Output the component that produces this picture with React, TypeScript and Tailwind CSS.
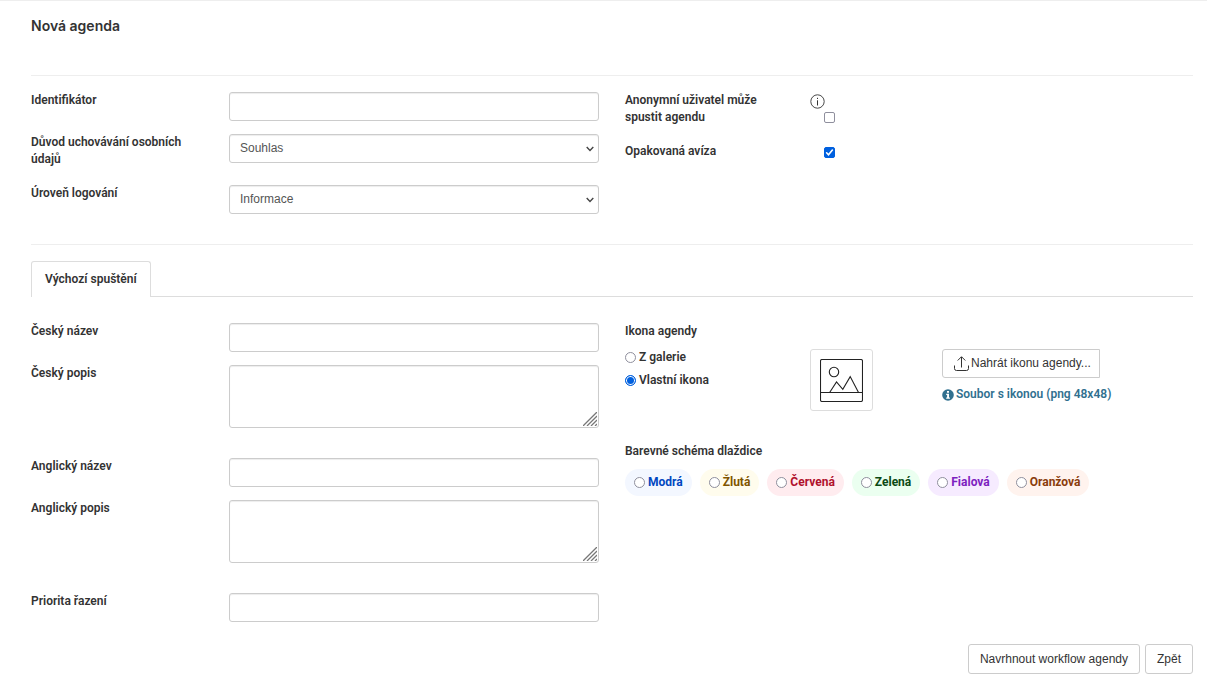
import React, { useState } from 'react';
import clsx from 'clsx';

const controlClass =
  "block w-full rounded-[3px] border border-[#ccc] bg-white font-['Liberation_Sans',sans-serif] text-[12px] font-normal text-[#555] shadow-[inset_0_1px_1px_rgba(0,0,0,0.075)] outline-none focus:border-[#66afe9]";

const radioClass =
  'size-[11px] shrink-0 appearance-none rounded-full border border-[#8f8f9d] bg-white checked:border-[#0060df] checked:bg-[#0060df] checked:shadow-[inset_0_0_0_1px_#fff]';

const buttonClass =
  "border border-[#ccc] bg-white font-['Liberation_Sans',sans-serif] font-normal text-[#333] hover:bg-gray-100";

interface FieldProps {
  id: string;
  label: string;
  children: React.ReactNode;
}

const Field: React.FC<FieldProps> = ({ id, label, children }) => (
  <div className="grid grid-cols-[198px_1fr]">
    <label htmlFor={id} className="pr-8 pb-[17px]">
      {label}
    </label>
    <div className="pb-[13px]">{children}</div>
  </div>
);

const TextField: React.FC<{ id: string; label: string }> = ({ id, label }) => (
  <Field id={id} label={label}>
    <input id={id} type="text" className={clsx(controlClass, 'h-[29px] px-2.5')} />
  </Field>
);

const TextAreaField: React.FC<{ id: string; label: string }> = ({ id, label }) => (
  <Field id={id} label={label}>
    <div className="relative mb-[17px]">
      <textarea id={id} className={clsx(controlClass, 'h-[63px] resize-none px-2.5 py-1')} />
      <svg
        viewBox="0 0 14 14"
        className="pointer-events-none absolute right-0.5 bottom-0.5 size-3.5"
        stroke="#777"
        strokeWidth="1.3"
      >
        <path d="M0 14L14 0M4 14L14 4M8 14L14 8M12 14L14 12" />
      </svg>
    </div>
  </Field>
);

const SelectField: React.FC<{ id: string; label: string; options: string[] }> = ({ id, label, options }) => (
  <Field id={id} label={label}>
    <div className="relative">
      <select id={id} className={clsx(controlClass, 'h-[29px] appearance-none px-2.5')}>
        {options.map(option => (
          <option key={option}>{option}</option>
        ))}
      </select>
      <svg
        viewBox="0 0 8 6"
        className="pointer-events-none absolute top-3 right-[5px] h-1.5 w-2"
        fill="none"
        stroke="#444"
        strokeWidth="1.4"
      >
        <path d="M0.7 1L4 4.4L7.3 1" />
      </svg>
    </div>
  </Field>
);

const Checkbox: React.FC<{ id: string; defaultChecked?: boolean }> = ({ id, defaultChecked }) => (
  <span className="relative ml-3.5 block size-[11px]">
    <input
      id={id}
      type="checkbox"
      defaultChecked={defaultChecked}
      className="peer block size-[11px] appearance-none rounded-[2px] border border-[#8f8f9d] bg-white checked:border-[#0060df] checked:bg-[#0060df]"
    />
    <svg
      viewBox="0 0 11 11"
      className="pointer-events-none absolute inset-0 hidden size-[11px] peer-checked:block"
      fill="none"
      stroke="#fff"
      strokeWidth="1.6"
      strokeLinecap="round"
    >
      <path d="M2.6 5.8L4.5 7.8L8.4 3" />
    </svg>
  </span>
);

const schemes = [
  { value: 'blue', label: 'Modrá', style: 'bg-[#f3f7ff] text-[#0046c0]' },
  { value: 'yellow', label: 'Žlutá', style: 'bg-[#fffced] text-[#805500]' },
  { value: 'red', label: 'Červená', style: 'bg-[#ffecef] text-[#b0102c]' },
  { value: 'green', label: 'Zelená', style: 'bg-[#ebfff0] text-[#0b4a14]' },
  { value: 'purple', label: 'Fialová', style: 'bg-[#f6ebff] text-[#7d1fc0]' },
  { value: 'orange', label: 'Oranžová', style: 'bg-[#fff3ee] text-[#8a3c0c]' },
];

const App: React.FC = () => {
  const [iconSource, setIconSource] = useState<'gallery' | 'custom'>('custom');
  const [scheme, setScheme] = useState('');

  return (
    <main className="border-t border-[#eee] bg-white pr-3.5 pl-[31px] font-['Roboto','Liberation_Sans',sans-serif] text-[12px] leading-[17px] font-semibold text-[#333]">
      <h1 className="pt-[15px] pb-[39px] font-['Inter',sans-serif] text-[14px] leading-5">Nová agenda</h1>

      <form onSubmit={e => e.preventDefault()}>
        {/* General settings */}
        <section className="grid grid-cols-2 gap-x-[26px] border-y border-[#eee] pt-4 pb-[17px]">
          <div>
            <TextField id="identifier" label="Identifikátor" />
            <SelectField
              id="reason"
              label="Důvod uchovávání osobních údajů"
              options={['Souhlas', 'Smlouva', 'Oprávněný zájem']}
            />
            <SelectField id="logging" label="Úroveň logování" options={['Informace', 'Varování', 'Chyba']} />
          </div>
          <div>
            <div className="grid grid-cols-[185px_1fr] pb-[17px]">
              <label htmlFor="anonymous" className="pr-8">
                Anonymní uživatel může spustit agendu
              </label>
              <div className="pt-0.5">
                <svg viewBox="0 0 15 15" className="mb-[3px] size-[15px]" fill="none" stroke="#333">
                  <circle cx="7.5" cy="7.5" r="6.7" strokeWidth="0.9" />
                  <path d="M7.5 6.3V11.5M7.5 3.8V5" />
                </svg>
                <Checkbox id="anonymous" />
              </div>
            </div>
            <div className="grid grid-cols-[185px_1fr]">
              <label htmlFor="notices">Opakovaná avíza</label>
              <div className="pt-1">
                <Checkbox id="notices" defaultChecked />
              </div>
            </div>
          </div>
        </section>

        {/* Tabs */}
        <div role="tablist" className="mt-4 flex border-b border-[#ddd]">
          <button
            type="button"
            role="tab"
            aria-selected="true"
            className="-mb-px h-9 rounded-t-[3px] border border-b-0 border-[#ddd] bg-white px-[13px]"
          >
            Výchozí spuštění
          </button>
        </div>

        <section className="mt-[26px] grid grid-cols-2 gap-x-[26px]">
          <div>
            <TextField id="name-cs" label="Český název" />
            <TextAreaField id="desc-cs" label="Český popis" />
            <TextField id="name-en" label="Anglický název" />
            <TextAreaField id="desc-en" label="Anglický popis" />
            <TextField id="priority" label="Priorita řazení" />
          </div>

          <div>
            <h2 className="mb-[9px]">Ikona agendy</h2>
            <div className="flex h-[94px] items-start">
              <div className="flex w-[185px] flex-col gap-1.5">
                <label className="flex items-center gap-[3px]">
                  <input
                    type="radio"
                    name="icon"
                    className={radioClass}
                    checked={iconSource === 'gallery'}
                    onChange={() => setIconSource('gallery')}
                  />
                  Z galerie
                </label>
                <label className="flex items-center gap-[3px]">
                  <input
                    type="radio"
                    name="icon"
                    className={radioClass}
                    checked={iconSource === 'custom'}
                    onChange={() => setIconSource('custom')}
                  />
                  Vlastní ikona
                </label>
              </div>
              <div className="w-[132px]">
                <div className="flex h-[62px] w-[63px] items-center justify-center rounded-[3px] border border-[#ddd]">
                  <svg viewBox="0 0 43 43" className="size-[43px]" fill="none" stroke="#222" strokeWidth="1.1">
                    <rect x="0.5" y="0.5" width="42" height="42" rx="1.5" />
                    <circle cx="14" cy="13" r="4.7" />
                    <path d="M0.5 33.5H42.5M9.8 33.2L16.5 22.9L22.8 30.4L30.2 17.6L38.4 33.2" />
                  </svg>
                </div>
              </div>
              <div>
                <button
                  type="button"
                  className={clsx(buttonClass, 'flex h-[29px] items-center gap-0.5 rounded-l-[3px] pr-2 pl-2.5')}
                >
                  <svg viewBox="0 0 16 16" className="size-4" fill="none" stroke="#333">
                    <path d="M8.5 11.5V1M4.7 4.5L8.5 0.7L12.3 4.5M1.5 9.5V12.5Q1.5 14.5 3.5 14.5H13.5Q15.5 14.5 15.5 12.5V9.5" />
                  </svg>
                  Nahrát ikonu agendy...
                </button>
                <p className="mt-2 flex items-center gap-0.5 text-[#31708f]">
                  <svg viewBox="0 0 12 12" className="size-3">
                    <circle cx="6" cy="6" r="5.8" fill="#31708f" />
                    <path d="M5 2.1H7V3.7H5ZM4.2 4.8H7V8.5H7.9V9.7H4.2V8.5H5.1V6H4.2Z" fill="#fff" />
                  </svg>
                  Soubor s ikonou (png 48x48)
                </p>
              </div>
            </div>

            <h2 className="mb-[9px]">Barevné schéma dlaždice</h2>
            <div className="flex flex-wrap gap-2">
              {schemes.map(item => (
                <label
                  key={item.value}
                  className={clsx('flex h-[27px] items-center gap-[3px] rounded-full px-[9px] font-bold', item.style)}
                >
                  <input
                    type="radio"
                    name="scheme"
                    className={radioClass}
                    checked={scheme === item.value}
                    onChange={() => setScheme(item.value)}
                  />
                  {item.label}
                </label>
              ))}
            </div>
          </div>
        </section>

        <div className="mt-[9px] flex justify-end gap-[5px] pb-2">
          <button type="submit" className={clsx(buttonClass, 'h-[30px] rounded-[3px] px-[11px]')}>
            Navrhnout workflow agendy
          </button>
          <button type="button" className={clsx(buttonClass, 'h-[30px] rounded-[3px] px-[11px]')}>
            Zpět
          </button>
        </div>
      </form>
    </main>
  );
};

export default App;
